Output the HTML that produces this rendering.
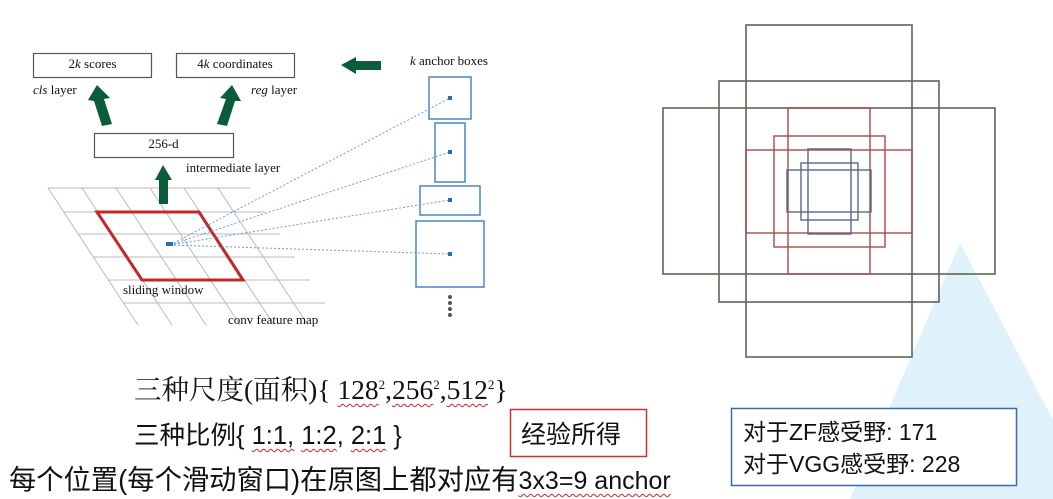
<!DOCTYPE html>
<html><head><meta charset="utf-8"><style>
body{margin:0;width:1053px;height:499px;overflow:hidden;background:#fff;position:relative;font-family:"Liberation Sans","Noto Sans CJK SC",sans-serif}
.t{position:absolute;white-space:nowrap;color:#111}
.s{font-family:"Liberation Serif","Noto Serif CJK SC",serif}
.u{text-decoration:underline wavy #d22;text-decoration-thickness:1px;text-underline-offset:4px}
</style></head><body>
<svg width="1053" height="499" style="position:absolute;left:0;top:0">
<polygon points="960,243 850,499 1053,499 1053,420" fill="#dff1fb"/>
<g stroke="#bbb" stroke-width="1">
<line x1="48" y1="188" x2="250" y2="188"/><line x1="64" y1="212" x2="265" y2="212"/><line x1="78" y1="234" x2="280" y2="234"/><line x1="93" y1="257" x2="295" y2="257"/><line x1="108" y1="280" x2="310" y2="280"/><line x1="123" y1="303" x2="325" y2="303"/>
<line x1="48" y1="188" x2="138" y2="325"/><line x1="82" y1="188" x2="172" y2="325"/><line x1="116" y1="188" x2="206" y2="325"/><line x1="150" y1="188" x2="240" y2="325"/><line x1="184" y1="188" x2="274" y2="325"/><line x1="218" y1="188" x2="308" y2="325"/>
</g>
<polygon points="97,212 199,212 243,280 142,280" fill="none" stroke="#c0282a" stroke-width="3"/>
<g fill="none" stroke="#555" stroke-width="1.2">
<rect x="33.5" y="53.5" width="118" height="24"/><rect x="176.5" y="53.5" width="118" height="24"/><rect x="94.5" y="133.5" width="139" height="24"/>
</g>
<g fill="#0b5c3a">
<polygon points="341,65 356,57 356,61 381,61 381,70 356,70 356,74"/>
<polygon points="97,85 88,100 94,101 102,126 112,124 104,99 110,98"/>
<polygon points="232,85 220,98 226,99 217,124 227,126 235,101 241,101"/>
<polygon points="163,165 155,180 159,180 159,204 168,204 168,180 172,180"/>
</g>
<g fill="none" stroke="#4a86c5" stroke-width="1.5">
<rect x="429" y="77" width="42" height="42"/><rect x="435" y="123" width="30" height="59"/><rect x="420" y="186" width="60" height="29"/><rect x="416" y="221" width="68" height="66"/>
</g>
<g stroke="#6a9fd4" stroke-width="1" stroke-dasharray="2,2">
<line x1="170" y1="245" x2="450" y2="98"/><line x1="170" y1="245" x2="450" y2="152"/><line x1="170" y1="245" x2="450" y2="200"/><line x1="170" y1="245" x2="450" y2="254"/>
</g>
<g fill="#2b6cb3"><rect x="448" y="96" width="4" height="4"/><rect x="448" y="150" width="4" height="4"/><rect x="448" y="198" width="4" height="4"/><rect x="448" y="252" width="4" height="4"/><rect x="166" y="242" width="7" height="4"/></g>
<g fill="#555"><circle cx="450" cy="297" r="2"/><circle cx="450" cy="303" r="2"/><circle cx="450" cy="309" r="2"/><circle cx="450" cy="315" r="2"/></g>
<g fill="none" stroke="#5f6656" stroke-width="1.6">
<rect x="746" y="25" width="166" height="332"/><rect x="719" y="81" width="220" height="221"/><rect x="663" y="108" width="332" height="166"/>
</g>
<g fill="none" stroke="#b04848" stroke-width="1.4">
<rect x="788" y="108" width="82" height="166"/><rect x="774" y="136" width="111" height="111"/><rect x="746" y="150" width="166" height="83"/>
</g>
<g fill="none" stroke="#56688a" stroke-width="1.4">
<rect x="808" y="149" width="43" height="85"/><rect x="801" y="163" width="57" height="57"/><rect x="787" y="170" width="84" height="42"/>
</g>
<rect x="510.5" y="409.5" width="136" height="47" fill="none" stroke="#d03030" stroke-width="1.5"/>
<rect x="731.5" y="408.5" width="285" height="77" fill="#fff" stroke="#3b6aa8" stroke-width="1.5"/>
</svg>
<div class="t s" style="left:0;top:56px;width:185px;text-align:center;font-size:13px">2<i>k</i> scores</div>
<div class="t s" style="left:176px;top:56px;width:118px;text-align:center;font-size:13px">4<i>k</i> coordinates</div>
<div class="t s" style="left:33px;top:82px;font-size:13px"><i>cls</i> layer</div>
<div class="t s" style="left:251px;top:82px;font-size:13px"><i>reg</i> layer</div>
<div class="t s" style="left:410px;top:53px;font-size:13px"><i>k</i> anchor boxes</div>
<div class="t s" style="left:94px;top:136px;width:139px;text-align:center;font-size:13px">256-d</div>
<div class="t s" style="left:186px;top:160px;font-size:13px">intermediate layer</div>
<div class="t s" style="left:123px;top:282px;font-size:13px">sliding window</div>
<div class="t s" style="left:228px;top:312px;font-size:13px">conv feature map</div>
<div class="t s" style="left:134px;top:367px;font-size:27.5px">三种尺度(面积){ <span class="u">128</span><sup style="font-size:13px">2</sup>,<span class="u">256</span><sup style="font-size:13px">2</sup>,<span class="u">512</span><sup style="font-size:13px">2</sup>}</div>
<div class="t" style="left:134px;top:415px;font-size:25.5px">三种比例{ <span class="u">1:1,</span> <span class="u">1:2</span>, <span class="u">2:1</span> }</div>
<div class="t" style="left:521px;top:415px;font-size:25px">经验所得</div>
<div class="t" style="left:9px;top:457px;font-size:27.3px">每个位置(每个滑动窗口)在原图上都对应有<span class="u" style="font-size:25px">3x3=9 anchor</span></div>
<div class="t" style="left:743px;top:416px;font-size:23px;line-height:32px">对于ZF感受野: 171<br>对于VGG感受野: 228</div>
</body></html>
